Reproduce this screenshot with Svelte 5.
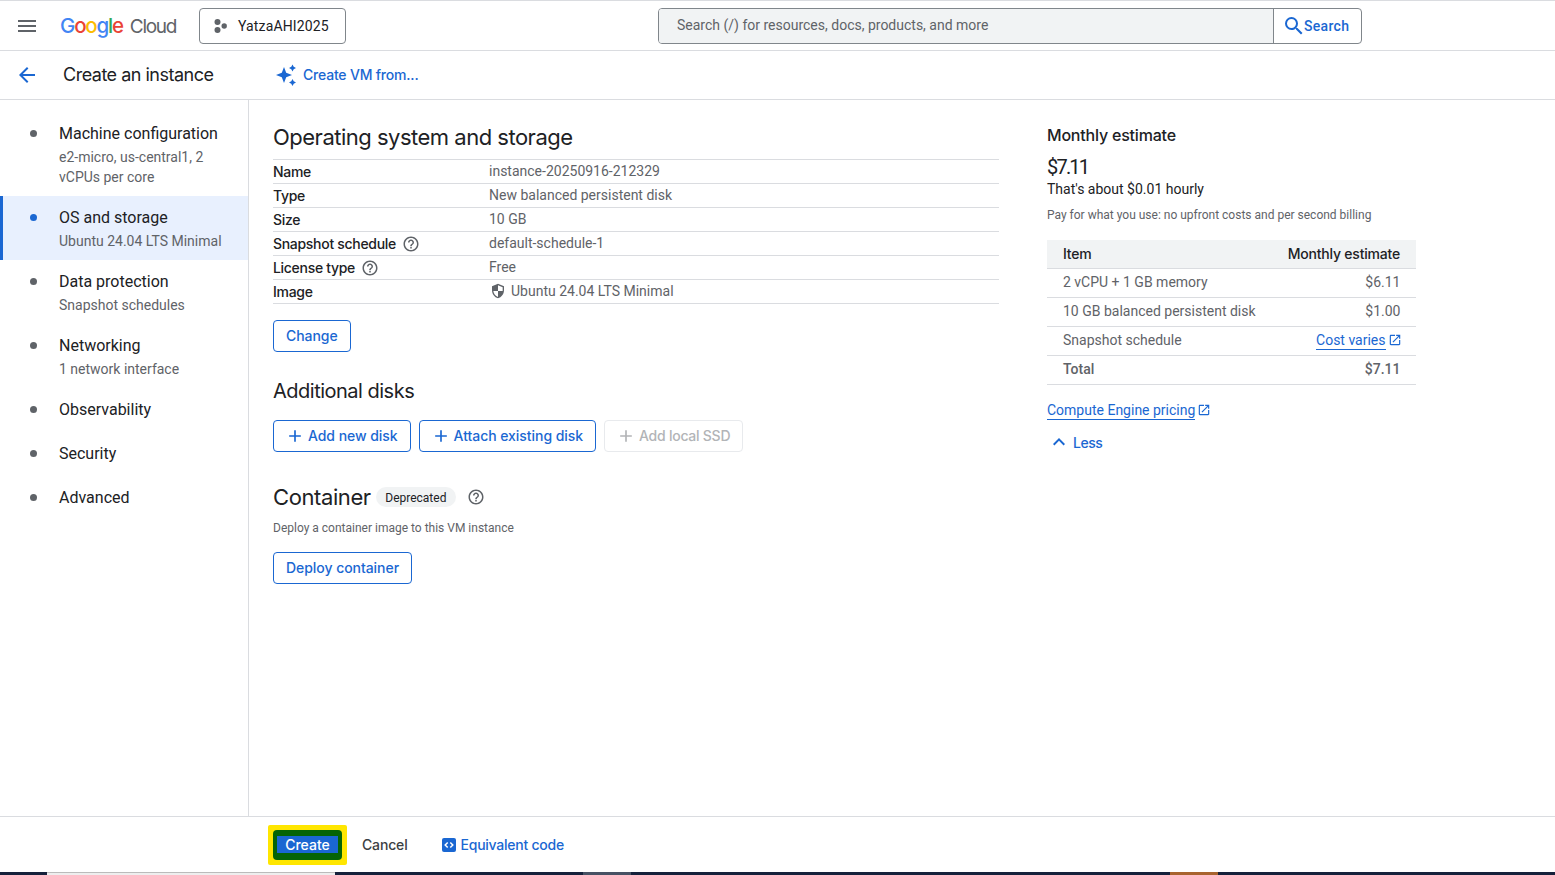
<script>
  const nav = [
    { title: 'Machine configuration', sub: 'e2-micro, us-central1, 2 vCPUs per core' },
    { title: 'OS and storage', sub: 'Ubuntu 24.04 LTS Minimal', active: true },
    { title: 'Data protection', sub: 'Snapshot schedules' },
    { title: 'Networking', sub: '1 network interface' },
    { title: 'Observability' },
    { title: 'Security' },
    { title: 'Advanced' },
  ];
  const disk = [
    { k: 'Name', v: 'instance-20250916-212329' },
    { k: 'Type', v: 'New balanced persistent disk' },
    { k: 'Size', v: '10 GB' },
    { k: 'Snapshot schedule', v: 'default-schedule-1', help: true },
    { k: 'License type', v: 'Free', help: true },
    { k: 'Image', v: 'Ubuntu 24.04 LTS Minimal', shield: true },
  ];
  const costs = [
    { k: '2 vCPU + 1 GB memory', v: '$6.11' },
    { k: '10 GB balanced persistent disk', v: '$1.00' },
    { k: 'Snapshot schedule', link: 'Cost varies' },
    { k: 'Total', v: '$7.11', total: true },
  ];
</script>

{#snippet help()}
  <svg class="help" viewBox="0 0 24 24" width="18" height="18" fill="#5f6368"><path d="M11 18h2v-2h-2v2zm1-16C6.48 2 2 6.48 2 12s4.48 10 10 10 10-4.48 10-10S17.52 2 12 2zm0 18c-4.41 0-8-3.59-8-8s3.59-8 8-8 8 3.59 8 8-3.59 8-8 8zm0-14c-2.21 0-4 1.79-4 4h2c0-1.1.9-2 2-2s2 .9 2 2c0 2-3 1.75-3 5h2c0-2.25 3-2.5 3-5 0-2.21-1.79-4-4-4z"/></svg>
{/snippet}
{#snippet plus()}
  <svg viewBox="0 0 24 24" width="20" height="20" fill="currentColor"><path d="M19 13h-6v6h-2v-6H5v-2h6V5h2v6h6v2z"/></svg>
{/snippet}
{#snippet external()}
  <svg class="ext" viewBox="0 0 24 24" width="14" height="14" fill="#1a67d2"><path d="M19 19H5V5h7V3H5c-1.1 0-2 .9-2 2v14c0 1.1.9 2 2 2h14c1.1 0 2-.9 2-2v-7h-2v7zM14 3v2h3.59l-9.83 9.83 1.41 1.41L19 6.41V10h2V3h-7z"/></svg>
{/snippet}

<div class="page">
  <header class="top">
    <button class="icon-btn" aria-label="Menu">
      <svg viewBox="0 0 24 24" width="24" height="24" fill="#5f6368"><path d="M3 18h18v-2H3v2zm0-5h18v-2H3v2zm0-7v2h18V6H3z"/></svg>
    </button>
    <div class="logo"><span class="g-b">G</span><span class="g-r">o</span><span class="g-y">o</span><span class="g-b">g</span><span class="g-g">l</span><span class="g-r">e</span><span class="cloud">Cloud</span></div>
    <button class="project">
      <svg viewBox="0 0 16 16" width="16" height="16" fill="#5f6368"><circle cx="4.500" cy="3.900" r="3"/><circle cx="4.500" cy="11.900" r="3"/><circle cx="11.200" cy="8" r="2.700"/></svg>
      <span>YatzaAHI2025</span>
    </button>
    <div class="search">
      <div class="search-input">Search (/) for resources, docs, products, and more</div>
      <button class="search-btn">
        <svg viewBox="0 0 24 24" width="24" height="24" fill="#1a67d2"><path d="M15.5 14h-.79l-.28-.27A6.47 6.47 0 0 0 16 9.5 6.5 6.5 0 1 0 9.5 16c1.61 0 3.09-.59 4.23-1.57l.27.28v.79l5 4.99L20.49 19l-4.99-5zm-6 0C7.01 14 5 11.99 5 9.5S7.01 5 9.5 5 14 7.01 14 9.5 11.99 14 9.5 14z"/></svg>
        <span>Search</span>
      </button>
    </div>
  </header>

  <div class="subbar">
    <button class="icon-btn back" aria-label="Back">
      <svg viewBox="0 0 24 24" width="24" height="24" fill="#1a67d2"><path d="M20 11H7.83l5.59-5.59L12 4l-8 8 8 8 1.41-1.41L7.83 13H20v-2z"/></svg>
    </button>
    <h1>Create an instance</h1>
    <button class="create-from">
      <svg viewBox="0 0 24 24" width="24" height="24" fill="#1a67d2"><path d="M10 4l2.200 5.800 5.800 2.200-5.800 2.200-2.200 5.800-2.200-5.800-5.800-2.200 5.800-2.200z"/><path d="M18.500 1.500l1.200 2.300 2.300 1.200-2.300 1.200-1.200 2.300-1.200-2.300-2.300-1.200 2.300-1.200zM18.500 16l1.200 2.300 2.300 1.200-2.300 1.200-1.200 2.300-1.200-2.300-2.300-1.200 2.300-1.200z"/></svg>
      <span>Create VM from...</span>
    </button>
  </div>

  <div class="body">
    <nav class="side">
      {#each nav as n (n.title)}
        <div class="step" class:active={n.active}>
          <span class="dot"></span>
          <div class="step-text">
            <div class="step-title">{n.title}</div>
            {#if n.sub}<div class="step-sub">{n.sub}</div>{/if}
          </div>
        </div>
      {/each}
    </nav>

    <main class="main">
      <section class="form">
        <h2>Operating system and storage</h2>
        <div class="kv">
          {#each disk as d (d.k)}
            <div class="kv-row">
              <div class="kv-key">{d.k}{#if d.help}{@render help()}{/if}</div>
              <div class="kv-val">
                {#if d.shield}
                  <svg class="shield" viewBox="0 0 24 24" width="16" height="16" fill="#5f6368"><path transform="translate(24 0) scale(-1 1)" fill-rule="evenodd" d="M12 1 3 5v6c0 5.550 3.840 10.740 9 12 5.160-1.260 9-6.450 9-12V5l-9-4zm0 11h7c-.530 4.120-3.280 7.790-7 8.940V12H5V6.300l7-3.110V12z"/></svg>
                {/if}
                <span>{d.v}</span>
              </div>
            </div>
          {/each}
        </div>
        <button class="btn change">Change</button>

        <h2 class="h-disks">Additional disks</h2>
        <div class="btn-row">
          <button class="btn has-icon">{@render plus()}Add new disk</button>
          <button class="btn has-icon">{@render plus()}Attach existing disk</button>
          <button class="btn has-icon disabled">{@render plus()}Add local SSD</button>
        </div>

        <div class="container-head">
          <h2>Container</h2>
          <span class="chip">Deprecated</span>
          {@render help()}
        </div>
        <p class="hint">Deploy a container image to this VM instance</p>
        <button class="btn">Deploy container</button>
      </section>

      <aside class="estimate">
        <h3>Monthly estimate</h3>
        <div class="price">$7.11</div>
        <div class="hourly">That's about $0.01 hourly</div>
        <p class="note">Pay for what you use: no upfront costs and per second billing</p>
        <div class="cost-table">
          <div class="cost-head"><span>Item</span><span>Monthly estimate</span></div>
          {#each costs as c (c.k)}
            <div class="cost-row" class:total={c.total}>
              <span>{c.k}</span>
              {#if c.link}
                <span class="link-wrap"><a href="#cost" class="link">{c.link}</a>{@render external()}</span>
              {:else}
                <span>{c.v}</span>
              {/if}
            </div>
          {/each}
        </div>
        <div class="pricing"><a href="#pricing" class="link">Compute Engine pricing</a>{@render external()}</div>
        <button class="less">
          <svg viewBox="0 0 24 24" width="24" height="24" fill="#1a67d2"><path d="M12 8l-6 6 1.410 1.410L12 10.830l4.590 4.580L18 14z"/></svg>
          <span>Less</span>
        </button>
      </aside>
    </main>
  </div>

  <footer class="foot">
    <div class="create-mark">
      <div class="create-inner"><button class="create">Create</button></div>
    </div>
    <button class="cancel">Cancel</button>
    <button class="equiv">
      <svg viewBox="0 0 14 14" width="14" height="14"><rect width="14" height="14" rx="2" fill="#1a67d2"/><path d="M5.700 4.500 3.200 7l2.500 2.500M8.300 4.500 10.800 7 8.300 9.500" fill="none" stroke="#fff" stroke-width="1.500"/></svg>
      <span>Equivalent code</span>
    </button>
  </footer>

  <div class="taskbar">
    <span class="tb-light"></span>
    <span class="tb-gray"></span>
    <span class="tb-orange"></span>
  </div>
</div>

<style>
  :global(body) {
    margin: 0;
    background: #fff;
  }
  .page {
    height: 875px;
    display: flex;
    flex-direction: column;
    overflow: hidden;
    font-family: Roboto, "Liberation Sans", sans-serif;
    font-size: 14px;
    color: #202124;
  }
  button {
    font: inherit;
    background: none;
    border: 0;
    padding: 0;
    cursor: pointer;
  }
  svg {
    display: block;
    flex: none;
  }

  /* top bar */
  .top {
    height: 49px;
    flex: none;
    display: flex;
    align-items: center;
    border-top: 1px solid #dadce0;
    border-bottom: 1px solid #dadce0;
    padding-left: 15px;
  }
  .icon-btn {
    width: 24px;
    height: 24px;
  }
  .logo {
    margin-left: 21px;
    width: 118px;
    font-family: Inter, Roboto, sans-serif;
    font-size: 20.500px;
    font-weight: 500;
    letter-spacing: -1.200px;
    white-space: nowrap;
  }
  .g-b { color: #4285f4; }
  .g-r { color: #ea4335; }
  .g-y { color: #fbbc04; }
  .g-g { color: #34a853; }
  .cloud {
    color: #5f6368;
    margin-left: 7px;
    font-size: 19px;
    font-weight: 400;
    letter-spacing: -1.300px;
  }
  .project {
    margin-left: 21px;
    width: 147px;
    height: 36px;
    box-sizing: border-box;
    display: flex;
    align-items: center;
    gap: 9px;
    padding-left: 13px;
    border: 1px solid #80868b;
    border-radius: 4px;
    color: #202124;
    letter-spacing: 0.15px;
  }
  .search {
    margin-left: 312px;
    width: 704px;
    height: 36px;
    box-sizing: border-box;
    display: flex;
    border: 1px solid #80868b;
    border-radius: 4px;
  }
  .search-input {
    flex: 1;
    background: #f1f3f4;
    border-radius: 3px 0 0 3px;
    padding-left: 18px;
    line-height: 32px;
    color: #5f6368;
  }
  .search-btn {
    width: 88px;
    display: flex;
    align-items: center;
    padding-left: 8px;
    box-sizing: border-box;
    border-left: 1px solid #80868b;
    color: #1a67d2;
    font-weight: 500;
    letter-spacing: 0.3px;
  }
  .search-btn span {
    margin-left: -2px;
  }

  /* page title */
  .subbar {
    height: 48px;
    flex: none;
    display: flex;
    align-items: center;
    border-bottom: 1px solid #dadce0;
    padding-left: 15px;
  }
  h1 {
    margin: 0 0 0 24px;
    width: 211px;
    padding-bottom: 2px;
    font-size: 18px;
    font-weight: 400;
    font-family: Inter, Roboto, sans-serif;
    letter-spacing: -0.5px;
    white-space: nowrap;
  }
  .create-from {
    display: flex;
    align-items: center;
    gap: 5px;
    color: #1a67d2;
    font-family: Inter, Roboto, sans-serif;
    font-weight: 500;
    letter-spacing: -0.2px;
  }
  .create-from span {
    padding-bottom: 2px;
  }

  /* body */
  .body {
    flex: 1;
    min-height: 0;
    display: flex;
  }
  .side {
    width: 248px;
    flex: none;
    border-right: 1px solid #dadce0;
    padding-top: 12px;
  }
  .step {
    display: flex;
    padding: 12px 20px 9px 0;
  }
  .step-text {
    min-height: 23px;
  }
  .step.active {
    background: #e8f0fe;
    box-shadow: inset 3px 0 0 #1a67d2;
  }
  .dot {
    width: 7px;
    height: 7px;
    flex: none;
    border-radius: 50%;
    background: #5f6368;
    margin: 6px 22px 0 30px;
  }
  .active .dot {
    background: #1a67d2;
  }
  .step-title {
    font-size: 16px;
    line-height: 20px;
    color: #202124;
  }
  .step-sub {
    margin-top: 3px;
    line-height: 20px;
    color: #5f6368;
  }

  .main {
    flex: 1;
    display: flex;
    padding-left: 24px;
  }
  .form {
    width: 726px;
    flex: none;
  }
  h2 {
    margin: 0;
    font-family: Inter, Roboto, sans-serif;
    font-size: 22px;
    font-weight: 400;
    letter-spacing: -0.4px;
    line-height: 28px;
  }
  .form > h2:first-child {
    padding-top: 23px;
    padding-bottom: 8px;
    letter-spacing: -0.5px;
  }
  .kv {
    border-top: 1px solid #dadce0;
  }
  .kv-row {
    height: 23px;
    display: flex;
    align-items: center;
    border-bottom: 1px solid #dadce0;
  }
  .kv-key {
    width: 216px;
    display: flex;
    align-items: center;
    gap: 6px;
    font-family: Inter, Roboto, sans-serif;
    font-weight: 500;
    letter-spacing: -0.3px;
    color: #202124;
  }
  .kv-val {
    display: flex;
    align-items: center;
    gap: 5px;
    padding-bottom: 2px;
    color: #5f6368;
  }
  .shield {
    margin-left: 1px;
  }

  .btn {
    display: inline-flex;
    align-items: center;
    height: 32px;
    box-sizing: border-box;
    padding: 0 12px 2px;
    border: 1px solid #1a67d2;
    border-radius: 4px;
    color: #1a67d2;
    font-family: Inter, Roboto, sans-serif;
    font-weight: 500;
    letter-spacing: -0.05px;
    white-space: nowrap;
  }
  .btn :global(svg) {
    margin-bottom: -2px;
  }
  .change {
    margin-top: 16px;
  }
  .h-disks {
    margin-top: 25px;
    font-size: 20px;
    letter-spacing: -0.5px;
  }
  .btn-row {
    display: flex;
    gap: 8px;
    margin-top: 15px;
  }
  .has-icon {
    gap: 3px;
    padding-left: 11px;
  }
  .disabled {
    border-color: #e8eaed;
    color: #b2b4b7;
    letter-spacing: -0.25px;
  }
  .container-head {
    display: flex;
    align-items: center;
    margin-top: 31px;
  }
  .chip {
    margin-left: 5px;
    padding: 0 9.500px;
    height: 20px;
    line-height: 22px;
    border-radius: 10px;
    background: #f1f3f4;
    font-size: 12px;
  }
  .container-head :global(.help) {
    margin-left: 11px;
  }
  .hint {
    margin: 9px 0 16px;
    font-size: 12px;
    line-height: 16px;
    color: #5f6368;
  }

  /* estimate panel */
  .estimate {
    margin-left: 48px;
    width: 369px;
    padding-top: 25px;
  }
  h3 {
    margin: 0;
    font-family: Inter, Roboto, sans-serif;
    font-size: 16px;
    font-weight: 500;
    letter-spacing: -0.2px;
    line-height: 20px;
  }
  .price {
    margin-top: 10px;
    font-size: 20px;
    letter-spacing: -1.800px;
    line-height: 24px;
  }
  .hourly {
    line-height: 20px;
  }
  .note {
    margin: 8px 0 0;
    font-size: 12px;
    line-height: 16px;
    color: #5f6368;
  }
  .cost-table {
    margin-top: 17px;
  }
  .cost-head,
  .cost-row {
    display: flex;
    justify-content: space-between;
    align-items: center;
    height: 29px;
    box-sizing: border-box;
    padding: 0 15.500px 2px 16px;
    border-bottom: 1px solid #dadce0;
  }
  .cost-head {
    padding-right: 16px;
    background: #f1f3f4;
    font-family: Inter, Roboto, sans-serif;
    font-weight: 500;
    letter-spacing: -0.2px;
  }
  .cost-row {
    color: #5f6368;
  }
  .total {
    font-weight: 500;
  }
  .link-wrap,
  .pricing {
    display: flex;
    align-items: center;
    gap: 2px;
  }
  .link {
    color: #1a67d2;
    text-decoration: none;
    border-bottom: 1px solid #1a67d2;
    line-height: 18px;
  }
  .link-wrap :global(.ext) {
    margin-right: -1px;
  }
  .link-wrap :global(.ext),
  .pricing :global(.ext) {
    margin-bottom: 1px;
  }
  .pricing {
    margin-top: 16px;
  }
  .less {
    display: flex;
    align-items: center;
    gap: 2px;
    margin-top: 10px;
    color: #1a67d2;
    font-family: Inter, Roboto, sans-serif;
    font-weight: 500;
    letter-spacing: -0.5px;
  }

  /* footer */
  .foot {
    height: 56px;
    flex: none;
    box-sizing: border-box;
    display: flex;
    align-items: center;
    border-top: 1px solid #dadce0;
    padding-left: 268px;
    font-family: Inter, Roboto, sans-serif;
  }
  .create-mark {
    width: 79px;
    height: 40px;
    box-sizing: border-box;
    background: #ffe600;
    padding: 5px;
    border-radius: 2px;
  }
  .create-inner {
    height: 100%;
    background: #056405;
    border-radius: 4px;
    display: flex;
    align-items: center;
    justify-content: center;
  }
  .create {
    width: 61px;
    height: 17px;
    line-height: 17px;
    background: #1a67d2;
    color: #fff;
    font-weight: 500;
  }
  .cancel {
    margin-left: 15px;
    color: #3c4043;
    font-weight: 500;
    letter-spacing: -0.15px;
  }
  .equiv {
    margin-left: 34px;
    display: flex;
    align-items: center;
    gap: 5px;
    color: #1a67d2;
    font-weight: 500;
    letter-spacing: -0.25px;
  }

  .taskbar {
    height: 3px;
    flex: none;
    background: #15213b;
    position: relative;
  }
  .taskbar span {
    position: absolute;
    top: 0;
    height: 3px;
  }
  .tb-light { left: 47px; width: 288px; background: #eee; border-top: 1px solid #bbb; box-sizing: border-box; }
  .tb-gray { left: 583px; width: 48px; background: #475264; }
  .tb-orange { left: 1170px; width: 48px; background: #a8642f; }
</style>
